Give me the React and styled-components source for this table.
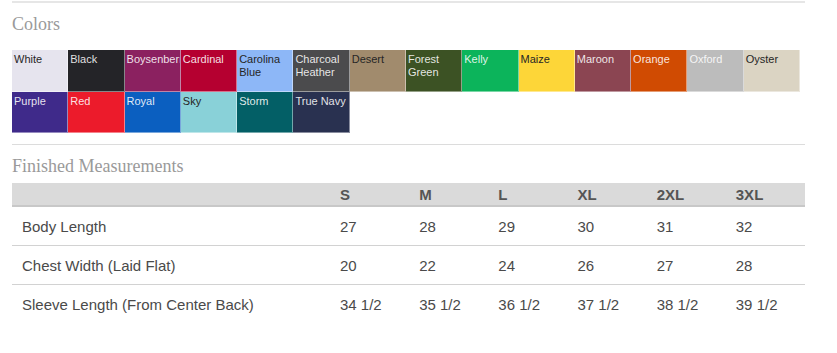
import React from 'react';
import styled, { createGlobalStyle } from 'styled-components';

const GlobalStyle = createGlobalStyle`
  html, body {
    margin: 0;
    padding: 0;
    background: #fff;
  }
  body {
    font-family: "Liberation Sans", Arial, sans-serif;
  }
`;

const Page = styled.div`
  width: 793px;
  padding: 1px 0 0 12px;
`;

const Rule = styled.div`
  height: ${(p) => p.$thick || 1}px;
  background: ${(p) => p.$color || '#dddddd'};
`;

const Heading = styled.h2`
  margin: ${(p) => p.$margin};
  font-family: "Liberation Serif", "Times New Roman", serif;
  font-weight: normal;
  font-size: 18px;
  line-height: 18px;
  color: #9a9a9a;
`;

const Swatches = styled.div`
  width: 788px;
  display: flex;
  flex-wrap: wrap;
  margin-bottom: 11px;
`;

const Swatch = styled.div`
  box-sizing: border-box;
  width: calc(100% / 14);
  height: 41.5px;
  padding: 3px 2px 0 2px;
  background: ${(p) => p.$bg};
  border-right: 1px solid rgba(255, 255, 255, 0.45);
  border-bottom: 1px solid rgba(255, 255, 255, 0.45);
  color: ${(p) => (p.$dark ? '#262626' : 'rgba(255, 255, 255, 0.88)')};
  font-size: 11px;
  line-height: 13px;
  overflow: hidden;
  white-space: ${(p) => (p.$wrap ? 'normal' : 'nowrap')};
`;

const Table = styled.table`
  width: 793px;
  border-collapse: collapse;
  table-layout: fixed;
  margin-top: 8px;
  font-size: 15px;
  color: #4a4a4a;
`;

const HeadCell = styled.th`
  height: 22px;
  padding: 0 0 0 10px;
  background: #dadada;
  border-bottom: 2px solid #c8c8c8;
  text-align: left;
  font-weight: bold;
  color: #555;
  width: ${(p) => p.$w || 'auto'};
`;

const Row = styled.tr`
  border-bottom: ${(p) => (p.$last ? 'none' : '1.5px solid #d2d2d2')};
`;

const Cell = styled.td`
  height: 38px;
  padding: 0 0 0 10px;
  text-align: left;
  white-space: nowrap;
`;

const colors = [
  { name: 'White', bg: '#e6e4ee', dark: true },
  { name: 'Black', bg: '#242428' },
  { name: 'Boysenberry', bg: '#8b2160' },
  { name: 'Cardinal', bg: '#b50030' },
  { name: 'Carolina Blue', bg: '#8db7f7', dark: true, wrap: true },
  { name: 'Charcoal Heather', bg: '#4b4b4d', wrap: true },
  { name: 'Desert', bg: '#a18b6d', dark: true },
  { name: 'Forest Green', bg: '#3c5224', wrap: true },
  { name: 'Kelly', bg: '#0cb45b' },
  { name: 'Maize', bg: '#fdd638', dark: true },
  { name: 'Maroon', bg: '#8b4552' },
  { name: 'Orange', bg: '#d04b02' },
  { name: 'Oxford', bg: '#bcbcbc' },
  { name: 'Oyster', bg: '#dbd4c3', dark: true },
  { name: 'Purple', bg: '#3f2a8a' },
  { name: 'Red', bg: '#ec1b2b' },
  { name: 'Royal', bg: '#0b5fc0' },
  { name: 'Sky', bg: '#89d1d8', dark: true },
  { name: 'Storm', bg: '#035f66' },
  { name: 'True Navy', bg: '#293150' },
];

const sizes = ['S', 'M', 'L', 'XL', '2XL', '3XL'];

const measurements = [
  { label: 'Body Length', values: ['27', '28', '29', '30', '31', '32'] },
  { label: 'Chest Width (Laid Flat)', values: ['20', '22', '24', '26', '27', '28'] },
  {
    label: 'Sleeve Length (From Center Back)',
    values: ['34 1/2', '35 1/2', '36 1/2', '37 1/2', '38 1/2', '39 1/2'],
  },
];

const App = () => (
  <>
    <GlobalStyle />
    <Page>
      <Rule $thick={2} $color="#e6e6e6" />
      <Heading $margin="12px 0 17px 0">Colors</Heading>
      <Swatches>
        {colors.map((c) => (
          <Swatch key={c.name} $bg={c.bg} $dark={c.dark} $wrap={c.wrap}>
            {c.name}
          </Swatch>
        ))}
      </Swatches>
      <Rule $color="#dcdcdc" />
      <Heading $margin="12px 0 0 0">Finished Measurements</Heading>
      <Table>
        <thead>
          <tr>
            <HeadCell $w="308px" />
            {sizes.map((s) => (
              <HeadCell key={s}>{s}</HeadCell>
            ))}
          </tr>
        </thead>
        <tbody>
          {measurements.map((m, i) => (
            <Row key={m.label} $last={i === measurements.length - 1}>
              <Cell>{m.label}</Cell>
              {m.values.map((v, j) => (
                <Cell key={j}>{v}</Cell>
              ))}
            </Row>
          ))}
        </tbody>
      </Table>
    </Page>
  </>
);

export default App;
